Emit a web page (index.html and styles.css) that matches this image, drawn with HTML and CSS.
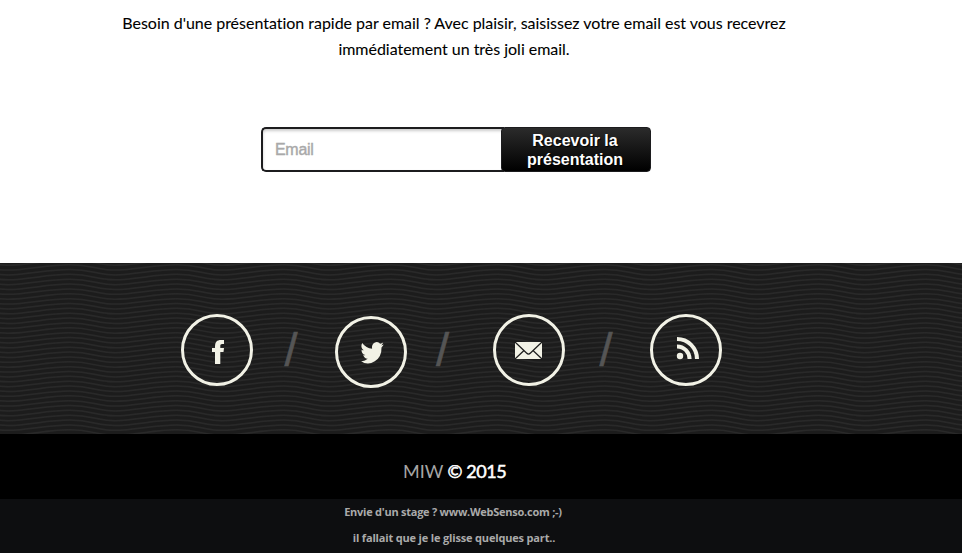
FILE: index.html
```html
<!DOCTYPE html>
<html lang="fr">
<head>
<meta charset="utf-8">
<title>MIW</title>
<link rel="stylesheet" href="styles.css">
</head>
<body>
<main class="intro">
  <p class="pitch">Besoin d'une présentation rapide par email ? Avec plaisir, saisissez votre email est vous recevrez<br>immédiatement un très joli email.</p>
  <form class="signup">
    <input class="email" type="email" placeholder="Email">
    <button class="send" type="button">Recevoir la<br>présentation</button>
  </form>
</main>
<section class="social">
  <svg class="waves" width="962" height="171" aria-hidden="true">
    <defs>
      <path id="line" d="M-37 -3.200C-17 -3.200-12 2.200 8 2.200S47-3.200 70-3.200 95 2.200 115 2.200"/>
      <pattern id="wave" width="107" height="34" patternUnits="userSpaceOnUse">
        <g fill="none" stroke="#292929" stroke-width="1.5">
          <use href="#line"/>
          <use href="#line" y="4.857"/>
          <use href="#line" y="9.714"/>
          <use href="#line" y="14.571"/>
          <use href="#line" y="19.429"/>
          <use href="#line" y="24.286"/>
          <use href="#line" y="29.143"/>
          <use href="#line" y="34"/>
          <use href="#line" y="38.857"/>
        </g>
      </pattern>
    </defs>
    <rect width="962" height="171" fill="url(#wave)"/>
  </svg>
  <nav class="links">
    <a class="ring" href="#" aria-label="Facebook"><svg width="66" height="66" viewBox="0 0 66 66"><path d="M31 47V35H28V31H31V29.500C31 25 33 23 37 23H40V27H38.200C36.700 27 36.300 27.700 36.300 29V31H40L39.500 35H36.300V47Z"/></svg></a>
    <span class="slash first">/</span>
    <a class="ring twitter" href="#" aria-label="Twitter"><svg width="66" height="66" viewBox="0 0 66 66"><path transform="translate(22.200 22.200) scale(1 1.130)" d="M23.500 2.900A9 9 0 0 1 21 3.700 4.600 4.600 0 0 0 23 1.200 9 9 0 0 1 20 2.300 4.800 4.800 0 0 0 11.900 6.700 13.600 13.600 0 0 1 2 1.700 4.800 4.800 0 0 0 3.500 8.100 4.700 4.700 0 0 1 1.300 7.500 4.800 4.800 0 0 0 5.200 12.200 4.800 4.800 0 0 1 3 12.300 4.800 4.800 0 0 0 7.500 15.600 9.600 9.600 0 0 1 .5 17.600 13.600 13.600 0 0 0 21.300 5.500 9.700 9.700 0 0 0 23.500 2.900Z"/></svg></a>
    <span class="slash second-slash">/</span>
    <a class="ring" href="#" aria-label="Email"><svg width="66" height="66" viewBox="0 0 66 66"><path d="M19 25H46V42H19Z"/><path class="fold" d="M19 25L30.500 36Q32.500 38 34.500 36L46 25M19 42L28 33.500M46 42L37 33.500"/></svg></a>
    <span class="slash third">/</span>
    <a class="ring" href="#" aria-label="RSS"><svg width="66" height="66" viewBox="0 0 66 66"><circle cx="27" cy="39" r="3.200"/><path class="wave-arc" d="M24 29.400A12.600 12.600 0 0 1 36.600 42M24 22A20 20 0 0 1 44 42"/></svg></a>
  </nav>
</section>
<footer>
  <p class="copyright"><span>MIW</span> © 2015</p>
  <div class="credits"><p>Envie d'un stage ? www.WebSenso.com ;-)</p><p class="second">il fallait que je le glisse quelques part..</p></div>
</footer>
</body>
</html>
```
FILE: styles.css
```css
* { box-sizing: border-box; }
body { margin: 0; background: #fff; color: #000; font-family: Lato, sans-serif; }
p { margin: 0; }
.intro { height: 263px; padding-top: 10px; }
.pitch { width: 908px; font-size: 16px; line-height: 26px; text-align: center; white-space: nowrap; letter-spacing: -.02px; font-variant-ligatures: none; -webkit-text-stroke: .08px; }
.signup { display: flex; width: 390px; height: 45px; margin: 65px 0 0 261px; }
.email { width: 243px; height: 45px; padding: 0 12px; border: 2px solid #1c1c1e; border-right: 0; border-radius: 5px 0 0 5px; background: #fff; box-shadow: inset 0 2px 3px #ccc; font: 16px "Liberation Sans", sans-serif; letter-spacing: -.3px; }
.email::placeholder { color: #a9a9a9; opacity: 1; -webkit-text-stroke: .4px #a9a9a9; }
.send { z-index: 1; width: 150px; height: 45px; margin-left: -3px; padding: 0 2px 0 0; border: 1px solid #1c1c1e; border-radius: 4px; background: linear-gradient(#2b2b2b, #000); color: #fff; font: bold 16px/19px "Liberation Sans", sans-serif; text-shadow: 1px 1px 1px #000; }
.social { display: grid; height: 171px; background: #1c1c1c; overflow: hidden; }
.waves, .links { grid-area: 1 / 1; }
.links { display: flex; align-items: flex-start; padding: 51px 0 0 181px; z-index: 1; }
.ring { flex: none; width: 72px; height: 72px; border: 3px solid #f2f2e6; border-radius: 50%; fill: #f2f2e6; }
.ring svg { display: block; }
.twitter { margin-top: 2px; }
.slash { flex: none; padding-top: 9px; color: #555; font: 47px/54px "Liberation Sans", sans-serif; text-align: center; -webkit-text-stroke: .6px; }
.first { width: 82px; padding-right: 6px; }
.second-slash { width: 86px; padding-right: 15px; }
.third { width: 85px; padding-right: 3px; }
.fold { fill: none; stroke: #1c1c1c; stroke-width: 1.2; }
.wave-arc { fill: none; stroke: #f2f2e6; stroke-width: 4; }
.copyright { height: 65px; padding-left: 403px; background: #000; color: #fff; font-size: 18px; line-height: 74px; letter-spacing: -.45px; -webkit-text-stroke: .5px; }
.copyright span { color: #a5a5a5; letter-spacing: 0; -webkit-text-stroke: 0; }
.credits { height: 54px; background: #0d0e10; color: #aaa; font: bold 11px/26px "Open Sans", sans-serif; letter-spacing: -.25px; text-align: center; width: 962px; padding-right: 56px; }
.second { padding-left: 2px; letter-spacing: -.17px; }
```
